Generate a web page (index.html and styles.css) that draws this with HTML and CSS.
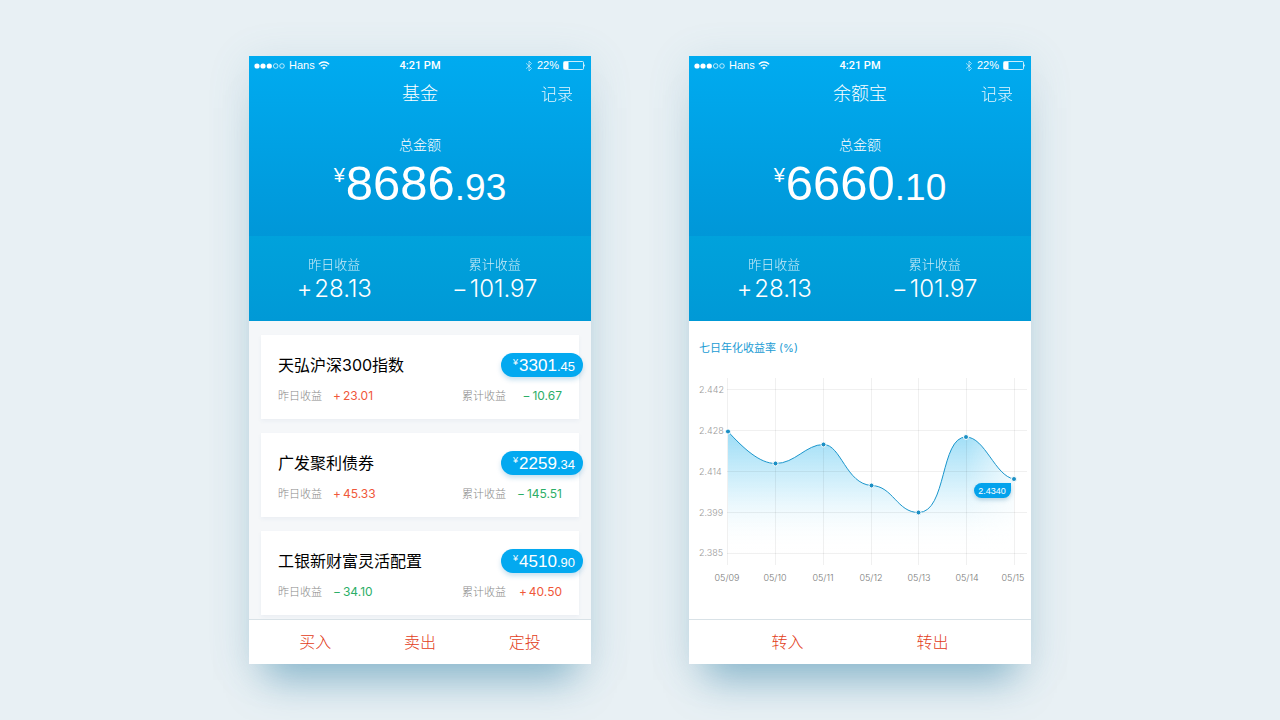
FILE: index.html
```html
<!DOCTYPE html>
<html lang="zh-CN">
<head>
<meta charset="utf-8">
<meta name="viewport" content="width=device-width, initial-scale=1">
<title>基金</title>
<link rel="stylesheet" href="styles.css">
</head>
<body>
<svg class="defs" width="0" height="0" aria-hidden="true">
  <symbol id="signal" viewBox="0 0 32 8">
    <g fill="#fff"><circle cx="3" cy="4" r="2.6"/><circle cx="9" cy="4" r="2.6"/><circle cx="15.300" cy="4" r="2.6"/></g>
    <g fill="none" stroke="#fff" stroke-width=".7"><circle cx="21.700" cy="4" r="2.300"/><circle cx="28" cy="4" r="2.300"/></g>
  </symbol>
  <symbol id="wifi" viewBox="0 0 12 9">
    <g fill="none" stroke="#fff" stroke-width="1.300"><path d="M.8 3.300Q6-1.300 11.200 3.300"/><path d="M2.700 5.300Q6 2.500 9.300 5.300"/></g>
    <path d="M4.200 6.700Q6 5.200 7.800 6.700L6 8.600Z" fill="#fff"/>
  </symbol>
  <symbol id="bluetooth" viewBox="0 0 8 12">
    <path d="M1 3.200L6.500 8.500L4 11V1L6.500 3.500L1 8.800" fill="none" stroke="#fff" stroke-width=".8" opacity=".7"/>
  </symbol>
  <symbol id="battery" viewBox="0 0 23 9">
    <rect x=".5" y=".5" width="20" height="8" rx="1" fill="none" stroke="#fff" stroke-width=".8"/>
    <rect x="1" y="1" width="4.500" height="7" fill="#fff"/>
    <path d="M21.300 3Q22.800 4.500 21.300 6Z" fill="#fff"/>
  </symbol>
</svg>
<main class="stage">
  <section class="phone">
    <header class="hero">
      <div class="status">
        <span class="status-side"><svg class="i-signal"><use href="#signal"/></svg>Hans<svg class="i-wifi"><use href="#wifi"/></svg></span>
        <span class="status-time">4:21 PM</span>
        <span class="status-side status-end"><svg class="i-bt"><use href="#bluetooth"/></svg>22%<svg class="i-battery"><use href="#battery"/></svg></span>
      </div>
      <nav class="nav"><h1>基金</h1><a href="#records">记录</a></nav>
      <div class="total">
        <p class="total-label">总金额</p>
        <p class="amount"><span class="yen">¥</span><span class="whole">8686</span><span class="cents">.93</span></p>
      </div>
      <dl class="metrics">
        <div><dt>昨日收益</dt><dd><span class="sign">+</span>28.13</dd></div>
        <div><dt>累计收益</dt><dd><span class="sign">−</span>101.97</dd></div>
      </dl>
    </header>
    <div class="funds">
      <article class="card">
        <div class="card-top"><h2>天弘沪深300指数</h2><span class="badge"><span class="badge-yen">¥</span>3301<small>.45</small></span></div>
        <div class="card-row"><span class="pair"><span>昨日收益</span><b class="up"><span class="sign">+</span>23.01</b></span><span class="pair pair-end"><span>累计收益</span><b class="down"><span class="sign">−</span>10.67</b></span></div>
      </article>
      <article class="card">
        <div class="card-top"><h2>广发聚利债券</h2><span class="badge"><span class="badge-yen">¥</span>2259<small>.34</small></span></div>
        <div class="card-row"><span class="pair"><span>昨日收益</span><b class="up"><span class="sign">+</span>45.33</b></span><span class="pair pair-end"><span>累计收益</span><b class="down"><span class="sign">−</span>145.51</b></span></div>
      </article>
      <article class="card">
        <div class="card-top"><h2>工银新财富灵活配置</h2><span class="badge"><span class="badge-yen">¥</span>4510<small>.90</small></span></div>
        <div class="card-row"><span class="pair"><span>昨日收益</span><b class="down"><span class="sign">−</span>34.10</b></span><span class="pair pair-end"><span>累计收益</span><b class="up"><span class="sign">+</span>40.50</b></span></div>
      </article>
    </div>
    <footer class="actions"><button type="button">买入</button><button type="button">卖出</button><button type="button">定投</button></footer>
  </section>

  <section class="phone">
    <header class="hero">
      <div class="status">
        <span class="status-side"><svg class="i-signal"><use href="#signal"/></svg>Hans<svg class="i-wifi"><use href="#wifi"/></svg></span>
        <span class="status-time">4:21 PM</span>
        <span class="status-side status-end"><svg class="i-bt"><use href="#bluetooth"/></svg>22%<svg class="i-battery"><use href="#battery"/></svg></span>
      </div>
      <nav class="nav"><h1>余额宝</h1><a href="#records">记录</a></nav>
      <div class="total">
        <p class="total-label">总金额</p>
        <p class="amount"><span class="yen">¥</span><span class="whole">6660</span><span class="cents">.10</span></p>
      </div>
      <dl class="metrics">
        <div><dt>昨日收益</dt><dd><span class="sign">+</span>28.13</dd></div>
        <div><dt>累计收益</dt><dd><span class="sign">−</span>101.97</dd></div>
      </dl>
    </header>
    <div class="yield">
      <h2>七日年化收益率 (%)</h2>
      <svg class="chart" viewBox="0 0 342 230" role="img" aria-label="七日年化收益率">
        <defs>
          <linearGradient id="area" gradientUnits="userSpaceOnUse" x1="0" y1="66" x2="0" y2="188">
            <stop offset="0" stop-color="#9adcf6"/><stop offset=".45" stop-color="#d0effb" stop-opacity=".85"/><stop offset="1" stop-color="#fff" stop-opacity="0"/>
          </linearGradient>
          <linearGradient id="edge" gradientUnits="userSpaceOnUse" x1="277" y1="0" x2="325" y2="0">
            <stop offset="0" stop-color="#fff"/><stop offset="1" stop-color="#fff" stop-opacity=".3"/>
          </linearGradient>
          <mask id="fade" maskUnits="userSpaceOnUse" x="0" y="0" width="342" height="230"><rect width="342" height="230" fill="url(#edge)"/></mask>
        </defs>
        <path d="M39 66.500C55 84 71 98.500 86.500 98.500C106 98.500 117 79.500 134.500 79.500C152 79.500 157 119 182.500 120.500C204 121 208 147.500 229.500 147.500C258 147.500 251 72 277 72C296 72 306 111 325 114V188H39Z" fill="url(#area)" mask="url(#fade)"/>
        <path class="grid" d="M38.500 13V200M86.500 13V200M134.500 13V200M182.500 13V200M229.500 13V200M277.500 13V200M325.500 13V200M38 24.500H338M38 65.500H338M38 106.500H338M38 147.500H338M38 188.500H338"/>
        <path class="line" d="M39 66.500C55 84 71 98.500 86.500 98.500C106 98.500 117 79.500 134.500 79.500C152 79.500 157 119 182.500 120.500C204 121 208 147.500 229.500 147.500C258 147.500 251 72 277 72C296 72 306 111 325 114"/>
        <g class="dots"><circle cx="39" cy="66.500" r="2.500"/><circle cx="86.500" cy="98.500" r="2.500"/><circle cx="134.500" cy="79.500" r="2.500"/><circle cx="182.500" cy="120.500" r="2.500"/><circle cx="229.500" cy="147.500" r="2.500"/><circle cx="277" cy="72" r="2.500"/><circle cx="325" cy="114" r="2.500"/></g>
        <g class="scale"><text x="10" y="28">2.442</text><text x="10" y="69">2.428</text><text x="10" y="110">2.414</text><text x="10" y="151">2.399</text><text x="10" y="191">2.385</text></g>
        <g class="dates"><text x="38" y="216">05/09</text><text x="86" y="216">05/10</text><text x="134" y="216">05/11</text><text x="182" y="216">05/12</text><text x="230" y="216">05/13</text><text x="278" y="216">05/14</text><text x="324" y="216">05/15</text></g>
        <path class="tip" d="M292.500 118H322V125.500A7.500 7.500 0 0 1 314.500 133H292.500A7.500 7.500 0 0 1 292.500 118Z"/>
        <text class="tip-text" x="303" y="129">2.4340</text>
      </svg>
    </div>
    <footer class="actions actions-two"><button type="button">转入</button><button type="button">转出</button></footer>
  </section>
</main>
</body>
</html>
```
FILE: styles.css
```css
* { box-sizing: border-box; }
body, h1, h2, p, dl, dd { margin: 0; font-weight: 300; }
body {
  background: #e8f0f4;
  color: #000;
  font-family: Inter, "Noto Sans CJK SC", sans-serif;
}
.defs { position: absolute; }
.stage {
  display: flex;
  justify-content: center;
  gap: 98px;
  min-height: 100vh;
  padding: 56px 24px;
}
.phone {
  display: flex;
  flex-direction: column;
  flex: 0 1 342px;
  min-width: 0;
  background: #fff;
  box-shadow: 0 34px 36px -18px rgba(65, 140, 175, .5), 0 6px 40px rgba(80, 140, 170, .16);
}
.hero {
  background: linear-gradient(#00abf0, #0097d8 180px);
  color: #fff;
}
.status, .amount, .badge, .tip-text { font-family: "Liberation Sans", Arial, sans-serif; }
.status {
  display: grid;
  grid-template-columns: 1fr auto 1fr;
  align-items: center;
  height: 19px;
  padding: 0 5px;
  font-size: 11px;
  font-weight: 400;
  line-height: 19px;
}
.status-side { display: flex; align-items: center; gap: 3px; }
.status-end { justify-content: flex-end; gap: 4px; }
.status-time { font-family: Roboto, sans-serif; font-weight: 500; }
.i-signal { width: 32px; height: 8px; }
.i-wifi { width: 12px; height: 9px; }
.i-bt { width: 8px; height: 12px; }
.i-battery { width: 23px; height: 9px; }
.nav {
  display: grid;
  grid-template-columns: 1fr auto 1fr;
  align-items: center;
  height: 37px;
  padding: 0 18px;
}
.nav h1 { grid-column: 2; font-size: 18px; line-height: 26px; }
.nav a { justify-self: end; color: #fff; font-size: 16px; line-height: 26px; text-decoration: none; opacity: .9; }
.total { height: 124px; padding-top: 23px; text-align: center; }
.total-label { font-size: 14px; line-height: 20px; }
.amount { display: flex; justify-content: center; align-items: baseline; line-height: 56px; }
.yen { align-self: flex-start; margin-right: 1px; font-size: 20px; line-height: 40px; }
.whole { font-size: 49px; }
.cents { font-size: 37px; }
.metrics {
  display: grid;
  grid-template-columns: 1fr 1fr;
  padding: 18px 16px 17px 5px;
  background: linear-gradient(#00a2dc, #0099d6);
  text-align: center;
}
.metrics dt { font-size: 13px; line-height: 20px; opacity: .8; }
.metrics dd { font-size: 24px; line-height: 30px; }
.metrics .sign { margin-right: 2px; }
.funds {
  flex: 1;
  display: flex;
  flex-direction: column;
  gap: 14px;
  padding: 14px 12px 4px;
  background: #f5f7f9;
}
.card { padding: 18px 17px 14px; background: #fff; box-shadow: 0 2px 4px rgba(60, 110, 150, .06); }
.card-top { display: flex; justify-content: space-between; align-items: center; height: 24px; margin-right: -21px; }
.card h2 { font-size: 16px; line-height: 24px; font-weight: 400; }
.badge {
  display: flex;
  justify-content: flex-end;
  align-items: baseline;
  width: 82px;
  height: 24px;
  padding-right: 8px;
  border-radius: 12px;
  background: #03a9f0;
  color: #fff;
  box-shadow: 0 3px 5px rgba(0, 120, 180, .22);
  font-size: 17px;
  line-height: 25px;
}
.badge small { font-size: 13px; }
.badge-yen { align-self: flex-start; margin-right: 1px; font-size: 9px; line-height: 18px; }
.card-row { display: flex; justify-content: space-between; align-items: center; height: 22px; margin-top: 8px; margin-bottom: -2px; line-height: 22px; }
.pair { display: flex; gap: 11px; color: #888; font-size: 11px; }
.pair b { font-size: 12px; font-weight: 400; }
.pair .sign { margin-right: 2px; }
.pair-end { gap: 0; }
.pair-end b { min-width: 56px; text-align: right; }
.pair .up { color: #f0583a; }
.pair .down { color: #2cae67; }
.yield { flex: 1; }
.yield h2 { padding: 18px 10px 0; color: #1b9cd4; font-size: 11px; line-height: 18px; font-weight: 400; }
.chart { display: block; width: 100%; margin-top: 8px; font-size: 9px; }
.grid { fill: none; stroke: #000; stroke-opacity: .06; }
.line { fill: none; stroke: #1b96cc; stroke-width: 1; }
.dots { fill: #1b8fc4; stroke: #fff; }
.scale { fill: #999; }
.dates { fill: #777; text-anchor: middle; }
.tip { fill: #03a2ec; filter: drop-shadow(0 2px 2px rgba(0, 90, 140, .25)); }
.tip-text { fill: #fff; font-size: 9px; font-weight: 400; text-anchor: middle; }
.actions { display: flex; padding: 0 14px; border-top: 1px solid #d9e2e7; background: #fff; }
.actions-two { padding: 0 26px; }
.actions button {
  flex: 1;
  padding: 0;
  border: 0;
  background: none;
  color: #e23c20;
  font: 300 16px/44px Inter, "Noto Sans CJK SC", sans-serif;
}
```
